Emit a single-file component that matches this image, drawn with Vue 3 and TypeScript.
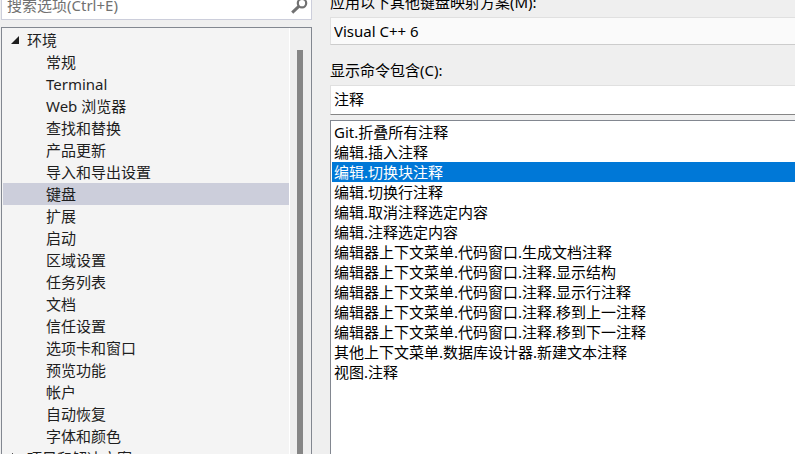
<script setup lang="ts">
import { ref } from 'vue'

const pages: string[] = [
  '常规',
  'Terminal',
  'Web 浏览器',
  '查找和替换',
  '产品更新',
  '导入和导出设置',
  '键盘',
  '扩展',
  '启动',
  '区域设置',
  '任务列表',
  '文档',
  '信任设置',
  '选项卡和窗口',
  '预览功能',
  '帐户',
  '自动恢复',
  '字体和颜色',
]

const commands: string[] = [
  'Git.折叠所有注释',
  '编辑.插入注释',
  '编辑.切换块注释',
  '编辑.切换行注释',
  '编辑.取消注释选定内容',
  '编辑.注释选定内容',
  '编辑器上下文菜单.代码窗口.生成文档注释',
  '编辑器上下文菜单.代码窗口.注释.显示结构',
  '编辑器上下文菜单.代码窗口.注释.显示行注释',
  '编辑器上下文菜单.代码窗口.注释.移到上一注释',
  '编辑器上下文菜单.代码窗口.注释.移到下一注释',
  '其他上下文菜单.数据库设计器.新建文本注释',
  '视图.注释',
]

const activePage = ref('键盘')
const activeCommand = ref('编辑.切换块注释')
const scheme = ref('Visual C++ 6')
const filter = ref('注释')
const search = ref('')
</script>

<template>
  <main class="dialog">
    <aside class="side">
      <div class="search">
        <input v-model="search" type="text" placeholder="搜索选项(Ctrl+E)" aria-label="搜索选项(Ctrl+E)" />
        <svg class="lens" viewBox="0 0 18 18" aria-hidden="true">
          <circle cx="12" cy="7.2" r="4.2" fill="none" stroke="#717171" stroke-width="2.2" />
          <path d="M8.8 10.4 L2.2 16.6" stroke="#717171" stroke-width="3" />
        </svg>
      </div>

      <nav class="tree">
        <ul class="nodes">
          <li>
            <button class="node root" type="button">
              <svg class="arrow" viewBox="0 0 10 10" aria-hidden="true">
                <path d="M9 1 V9 H1 Z" fill="#1e1e1e" />
              </svg>
              环境
            </button>
            <ul class="children">
              <li v-for="page in pages" :key="page">
                <button
                  class="node leaf"
                  :class="{ active: page === activePage }"
                  type="button"
                  @click="activePage = page"
                >
                  {{ page }}
                </button>
              </li>
            </ul>
          </li>
          <li>
            <button class="node root" type="button">
              <svg class="arrow" viewBox="0 0 10 10" aria-hidden="true">
                <path d="M2.5 0.5 L7 5 L2.5 9.5 Z" fill="none" stroke="#1e1e1e" />
              </svg>
              项目和解决方案
            </button>
          </li>
        </ul>
        <div class="scrollbar"><div class="thumb"></div></div>
      </nav>
    </aside>

    <section class="panel">
      <label class="caption" for="scheme">应用以下其他键盘映射方案(M):</label>
      <select id="scheme" v-model="scheme" class="field scheme">
        <option>Visual C++ 6</option>
      </select>
      <label class="caption second" for="filter">显示命令包含(C):</label>
      <input id="filter" v-model="filter" class="field filter" type="text" />
      <ul class="commands">
        <li v-for="command in commands" :key="command">
          <button
            class="command"
            :class="{ active: command === activeCommand }"
            type="button"
            @click="activeCommand = command"
          >
            {{ command }}
          </button>
        </li>
      </ul>
    </section>
  </main>
</template>

<style>
body {
  overflow: hidden;
  background: #efefef;
}
</style>

<style scoped>
* {
  box-sizing: border-box;
}

.dialog {
  display: flex;
  gap: 18px;
  height: calc(100vh + 10px);
  margin-top: -10px;
  padding-left: 1px;
  background: #efefef;
  color: #000;
  font-family: 'Noto Sans', 'Noto Sans CJK SC', sans-serif;
  font-size: 15px;
  line-height: 20px;
}

button,
input,
select {
  margin: 0;
  border: 0;
  border-radius: 0;
  outline: 0;
  color: inherit;
  font: inherit;
}

ul {
  margin: 0;
  padding: 0;
  list-style: none;
}

.side {
  display: flex;
  flex: 0 0 311px;
  flex-direction: column;
  gap: 7px;
}

.search {
  display: flex;
  align-items: center;
  flex: none;
  height: 30px;
  padding: 0 3px 0 5px;
  border: 1px solid #cccedb;
  background: #fff;
}

.search input {
  flex: 1;
  min-width: 0;
  padding: 0;
  background: none;
}

.search input::placeholder {
  color: #717171;
  opacity: 1;
}

.lens {
  width: 18px;
  height: 18px;
}

.tree {
  display: flex;
  flex: 1;
  min-height: 0;
  overflow: hidden;
  border: 1px solid #828790;
  border-bottom: 0;
  background: #f4f4f4;
  color: #1e1e1e;
}

.nodes {
  flex: 1;
  padding: 1px 0 0 1px;
}

.node {
  display: flex;
  align-items: center;
  width: 100%;
  height: 22px;
  padding: 0;
  background: none;
  text-align: left;
  white-space: nowrap;
}

.root {
  gap: 7px;
  padding-left: 7px;
}

.leaf {
  padding-left: 43px;
}

.node.active {
  background: #cccedb;
}

.arrow {
  width: 10px;
  height: 10px;
}

.scrollbar {
  flex: 0 0 22px;
  padding: 22px 8px 0 7px;
  border-left: 1px solid #fff;
  background: #efefef;
}

.thumb {
  height: 100%;
  background: #868686;
}

.panel {
  display: flex;
  flex: 1;
  flex-direction: column;
  min-width: 0;
}

.caption {
  flex: none;
  height: 20px;
  margin: 2px 0 5px;
}

.second {
  margin-top: 15px;
}

.field {
  flex: none;
  width: 100%;
  padding: 0 3px;
  border: 1px solid #e0e0e0;
  border-right: 0;
}

.scheme {
  height: 28px;
  appearance: none;
  border-bottom-color: #ccc;
  background: #fafafa;
}

.filter {
  height: 30px;
  padding-bottom: 4px;
  border-bottom-color: #868686;
  background: #fff;
}

.commands {
  flex: 1;
  min-height: 0;
  margin-top: 5px;
  padding: 1px 0 0 1px;
  overflow: hidden;
  border: 1px solid #828790;
  border-right: 0;
  border-bottom: 0;
  background: #fff;
}

.command {
  display: block;
  width: 100%;
  height: 20px;
  padding: 0 2px;
  background: none;
  text-align: left;
  white-space: nowrap;
}

.command.active {
  background: #0078d7;
  color: #fff;
}
</style>
